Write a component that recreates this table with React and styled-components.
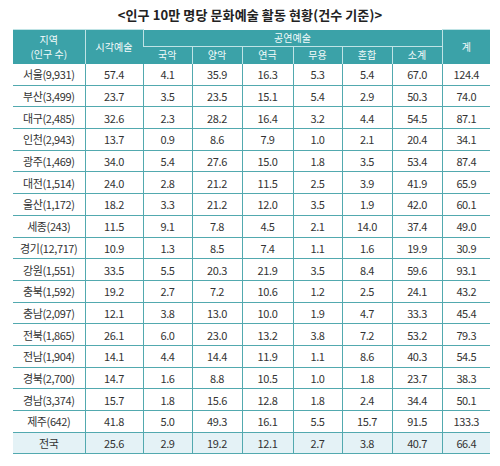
import React from "react";
import styled, { createGlobalStyle } from "styled-components";

const GlobalStyle = createGlobalStyle`
	body {
		margin: 0;
		background: #ffffff;
		font-family: "Noto Sans CJK KR", "Noto Sans", sans-serif;
	}
`;

const Page = styled.div`
	width: 500px;
	height: 466px;
	padding: 6px 10px 0 13px;
	box-sizing: border-box;
	overflow: hidden;
`;

const Title = styled.div`
	text-align: center;
	font-size: 13px;
	font-weight: 700;
	color: #222;
	height: 17px;
	line-height: 17px;
	margin-bottom: 6px;
	padding-right: 3px;
	letter-spacing: 0.1px;
`;

const Table = styled.table`
	width: 477px;
	border-collapse: collapse;
	table-layout: fixed;
`;

const HeadCell = styled.th`
	background: #3ba2a8;
	color: #f4fbfb;
	font-weight: 400;
	font-size: 10px;
	line-height: 14px;
	padding: 0;
	height: ${({ h }) => h || 16}px;
	border-left: 1px solid #bfe3e5;
	border-top: 1px solid #bfe3e5;
	&:first-child {
		border-left: none;
	}
`;

const Row = styled.tr`
	height: 21.7px;
	background: ${({ total }) => (total ? "#e4f2f6" : "#ffffff")};
`;

const Cell = styled.td`
	font-size: 11px;
	color: #333;
	text-align: center;
	padding: 0;
	letter-spacing: -0.4px;
	border-bottom: 1px solid #52a9af;
	border-left: 1px solid #52a9af;
	&:first-child {
		border-left: none;
	}
`;

const widths = [72, 58, 49, 50, 51, 49, 50, 50, 48];

const rows = [
	["서울(9,931)", "57.4", "4.1", "35.9", "16.3", "5.3", "5.4", "67.0", "124.4"],
	["부산(3,499)", "23.7", "3.5", "23.5", "15.1", "5.4", "2.9", "50.3", "74.0"],
	["대구(2,485)", "32.6", "2.3", "28.2", "16.4", "3.2", "4.4", "54.5", "87.1"],
	["인천(2,943)", "13.7", "0.9", "8.6", "7.9", "1.0", "2.1", "20.4", "34.1"],
	["광주(1,469)", "34.0", "5.4", "27.6", "15.0", "1.8", "3.5", "53.4", "87.4"],
	["대전(1,514)", "24.0", "2.8", "21.2", "11.5", "2.5", "3.9", "41.9", "65.9"],
	["울산(1,172)", "18.2", "3.3", "21.2", "12.0", "3.5", "1.9", "42.0", "60.1"],
	["세종(243)", "11.5", "9.1", "7.8", "4.5", "2.1", "14.0", "37.4", "49.0"],
	["경기(12,717)", "10.9", "1.3", "8.5", "7.4", "1.1", "1.6", "19.9", "30.9"],
	["강원(1,551)", "33.5", "5.5", "20.3", "21.9", "3.5", "8.4", "59.6", "93.1"],
	["충북(1,592)", "19.2", "2.7", "7.2", "10.6", "1.2", "2.5", "24.1", "43.2"],
	["충남(2,097)", "12.1", "3.8", "13.0", "10.0", "1.9", "4.7", "33.3", "45.4"],
	["전북(1,865)", "26.1", "6.0", "23.0", "13.2", "3.8", "7.2", "53.2", "79.3"],
	["전남(1,904)", "14.1", "4.4", "14.4", "11.9", "1.1", "8.6", "40.3", "54.5"],
	["경북(2,700)", "14.7", "1.6", "8.8", "10.5", "1.0", "1.8", "23.7", "38.3"],
	["경남(3,374)", "15.7", "1.8", "15.6", "12.8", "1.8", "2.4", "34.4", "50.1"],
	["제주(642)", "41.8", "5.0", "49.3", "16.1", "5.5", "15.7", "91.5", "133.3"],
];

const total = ["전국", "25.6", "2.9", "19.2", "12.1", "2.7", "3.8", "40.7", "66.4"];

const subHeads = ["국악", "양악", "연극", "무용", "혼합", "소계"];

export default function App() {
	return (
		<Page>
			<GlobalStyle />
			<Title>&lt;인구 10만 명당 문화예술 활동 현황(건수 기준)&gt;</Title>
			<Table>
				<colgroup>
					{widths.map((w, i) => (
						<col key={i} style={{ width: w }} />
					))}
				</colgroup>
				<thead>
					<tr>
						<HeadCell rowSpan={2} h={16}>
							지역
							<br />
							(인구 수)
						</HeadCell>
						<HeadCell rowSpan={2}>시각예술</HeadCell>
						<HeadCell colSpan={6} style={{ borderTop: "none" }}>
							공연예술
						</HeadCell>
						<HeadCell rowSpan={2}>계</HeadCell>
					</tr>
					<tr>
						{subHeads.map((s) => (
							<HeadCell key={s} h={17}>
								{s}
							</HeadCell>
						))}
					</tr>
				</thead>
				<tbody>
					{rows.map((r) => (
						<Row key={r[0]}>
							{r.map((v, i) => (
								<Cell key={i}>{v}</Cell>
							))}
						</Row>
					))}
					<Row total>
						{total.map((v, i) => (
							<Cell key={i}>{v}</Cell>
						))}
					</Row>
				</tbody>
			</Table>
		</Page>
	);
}
